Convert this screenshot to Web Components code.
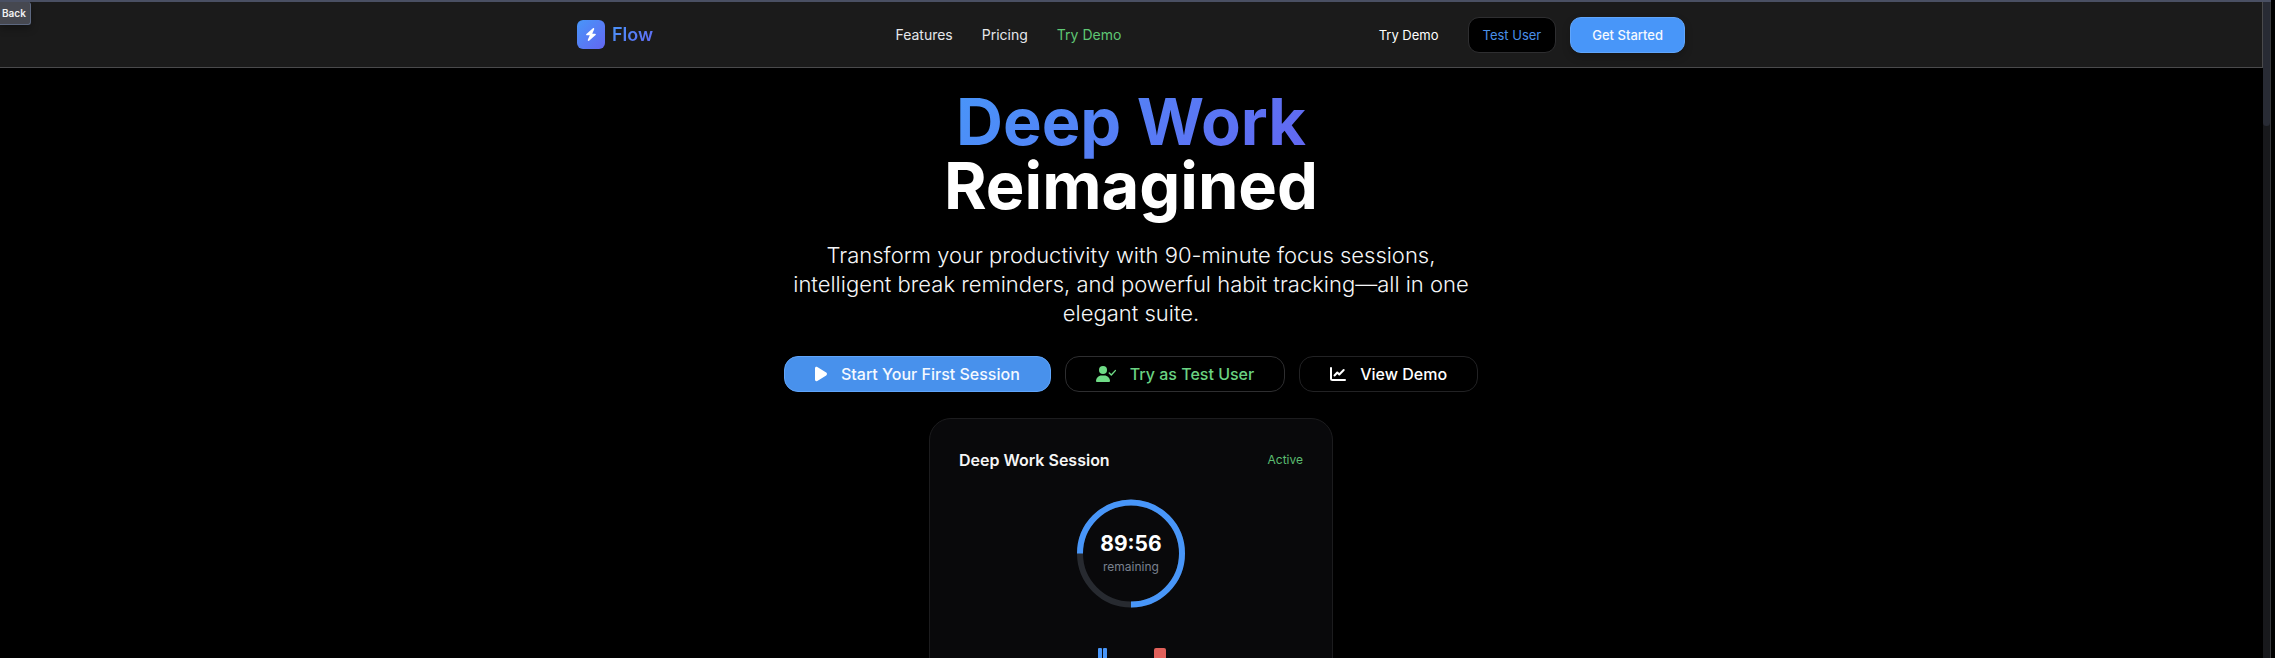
<!DOCTYPE html>
<html lang="en">
<head>
<meta charset="utf-8">
<title>Flow – Deep Work Reimagined</title>
<style>
html, body { margin: 0; height: 100%; }
body { background: #000; color: #fff; font-family: Inter, sans-serif; overflow: hidden; }
</style>
</head>
<body>
<flow-page></flow-page>
<script>
const define = (name, html) => customElements.define(name, class extends HTMLElement {
  constructor() {
    super();
    const t = document.createElement('template');
    t.innerHTML = html;
    this.attachShadow({ mode: 'open' }).append(t.content.cloneNode(true));
  }
});

define('flow-logo', `
<style>
:host { display: block; }
a { display: flex; align-items: center; gap: 7px; text-decoration: none; font-size: 18px; line-height: 28px; font-weight: 600; }
.mark { display: grid; place-items: center; width: 28px; height: 29px; border-radius: 6px; background: linear-gradient(135deg, #4896f9, #6366f1); }
.name { background: linear-gradient(135deg, #4896f9, #6366f1); -webkit-background-clip: text; background-clip: text; color: transparent; }
svg { display: block; }
</style>
<a href="#"><span class="mark"><svg width="12" height="13" viewBox="0 0 448 512"><path d="M349.4 44.6c5.9-13.7 1.5-29.7-10.6-38.5s-28.6-8-39.9 1.8l-256 224c-10 8.8-13.6 22.9-8.9 35.3S50.7 288 64 288l111.500 0L98.600 467.400c-5.900 13.700-1.500 29.700 10.600 38.500s28.600 8 39.900-1.800l256-224c10-8.800 13.600-22.900 8.900-35.300s-16.600-20.700-30-20.700l-111.500 0L349.400 44.600z" fill="#fff"/></svg></span><span class="name">Flow</span></a>`);

define('flow-nav', `
<style>
:host { display: block; }
nav { display: flex; gap: 29px; font-size: 14px; line-height: 20px; }
::slotted(a) { color: #e5e7eb; text-decoration: none; }
::slotted(a.accent) { color: #5fc774; }
</style>
<nav aria-label="Main"><slot></slot></nav>`);

define('flow-button', `
<style>
:host { display: block; }
button { display: flex; align-items: center; justify-content: center; gap: 14px; box-sizing: border-box; height: 36px; width: 100%; margin: 0; padding: 0 var(--pad, 14px); border: 1px solid var(--line, #2e2e30); border-radius: 11px; background: #000; color: inherit; font: 400 13px/16px Inter, sans-serif; white-space: nowrap; }
:host([kind=primary]) button { background: #4896f9; border-color: #60a5fa; color: #f5f9ff; font-weight: 500; box-shadow: 0 4px 8px #0003; }
:host([kind=plain]) button { background: none; border-color: transparent; }
:host([size=large]) button { font-size: 16px; font-weight: 500; line-height: 24px; border-radius: 14px; }
:host([size=large][kind=primary]) button { background: #4891ec; }
</style>
<button type="button"><slot name="icon"></slot><slot></slot></button>`);

define('flow-header', `
<style>
:host { display: block; background: #1b1b1b; border: solid #4a4a4c; border-width: 0 1px 1px 0; }
.bar { display: flex; justify-content: space-between; align-items: center; max-width: 1108px; margin: 0 auto; height: 65px; }
.actions { display: flex; gap: 14px; align-items: center; }
.test { color: #4a90e8; }
.start { --pad: 21px; }
</style>
<header><div class="bar">
<flow-logo></flow-logo>
<flow-nav><a href="#features">Features</a><a href="#pricing">Pricing</a><a class="accent" href="#demo">Try Demo</a></flow-nav>
<div class="actions"><flow-button kind="plain">Try Demo</flow-button><flow-button class="test">Test User</flow-button><flow-button class="start" kind="primary">Get Started</flow-button></div>
</div></header>`);

define('flow-hero', `
<style>
:host { display: block; text-align: center; }
h1 { margin: 0; padding-top: 22px; font-size: 65px; line-height: 64px; font-weight: 700; }
.grad { background: linear-gradient(135deg, #4896f9, #6366f1); -webkit-background-clip: text; background-clip: text; color: transparent; }
p { max-width: 690px; margin: 23px auto 0; font-size: 22px; line-height: 29px; font-weight: 300; color: #f5f6f8; }
.cta { display: flex; justify-content: center; gap: 14px; margin-top: 28px; --pad: 30px; }
.user { color: #6ad382; }
.view { --line: #222224; }
svg { display: block; }
</style>
<h1><span class="grad">Deep Work</span><br>Reimagined</h1>
<p>Transform your productivity with 90-minute focus sessions, intelligent break reminders, and powerful habit tracking—all in one elegant suite.</p>
<div class="cta">
<flow-button size="large" kind="primary"><svg slot="icon" width="12" height="16" viewBox="0 0 12 16"><path d="M0 2.200C0 .9 1.300.4 2.300 1L11.200 6.600c1 .6 1 2.200 0 2.800L2.300 15C1.300 15.600 0 15.100 0 13.800z" fill="#fff"/></svg>Start Your First Session</flow-button>
<flow-button size="large" class="user"><svg slot="icon" width="20" height="16" viewBox="0 0 20 16" fill="#6fdb86"><circle cx="7" cy="4" r="4"/><path d="M5.600 9.500h2.800c3.100 0 5.600 2.500 5.600 5.600 0 .5-.4.9-.9.9H.9c-.5 0-.9-.4-.9-.9C0 12 2.500 9.500 5.600 9.500z"/><path d="m13.300 7 2 2 4-4.400" fill="none" stroke="#6fdb86" stroke-width="1.400" stroke-linecap="round" stroke-linejoin="round"/></svg>Try as Test User</flow-button>
<flow-button size="large" class="view"><svg slot="icon" width="16" height="14" viewBox="0 0 16 14" fill="none" stroke="#fff" stroke-width="2" stroke-linecap="round" stroke-linejoin="round"><path d="M1 1v10.500c0 .8.700 1.500 1.500 1.500H15M4.500 8.500 7.300 5.500l2 2 4.400-4.500"/></svg>View Demo</flow-button>
</div>`);

define('session-timer', `
<style>
:host { display: grid; width: 108px; height: 109px; margin: 0 auto; }
svg, .text { grid-area: 1 / 1; }
svg { width: 100%; height: 100%; }
.text { align-self: center; text-align: center; padding-bottom: 2px; }
.time { font-size: 21px; line-height: 28px; font-weight: 700; }
.note { font-size: 12px; line-height: 18px; color: #7a818f; }
</style>
<svg viewBox="0 0 108 108" fill="none" stroke-width="6"><circle cx="54" cy="54" r="51" stroke="#272a30"/><path d="M3 54a51 51 0 1 1 51 51" stroke="#4896f9"/></svg>
<div class="text"><div class="time">89:56</div><div class="note">remaining</div></div>`);

define('session-card', `
<style>
:host { display: block; box-sizing: border-box; max-width: 404px; margin: 26px auto 0; padding: 29px; border: 1px solid #1c1c1e; border-radius: 22px; background: #09090b; }
.head { display: flex; justify-content: space-between; align-items: center; margin-bottom: 27px; }
h2 { margin: 0; font-size: 16px; line-height: 24px; font-weight: 600; color: #f5f5f5; }
.state { font-size: 12px; line-height: 16px; color: #5bbd71; }
.controls { display: flex; justify-content: center; gap: 14px; margin-top: 24px; }
button { display: grid; place-items: center; width: 44px; height: 44px; padding: 0; border: 0; background: none; }
</style>
<div class="head"><h2>Deep Work Session</h2><span class="state">Active</span></div>
<session-timer></session-timer>
<div class="controls">
<button type="button" aria-label="Pause"><svg width="9" height="12" viewBox="0 0 9 12" fill="#4896f9"><rect width="4" height="12" rx="1"/><rect x="5" width="4" height="12" rx="1"/></svg></button>
<button type="button" aria-label="Stop"><svg width="12" height="12" viewBox="0 0 12 12"><rect width="12" height="12" rx="2" fill="#e0605a"/></svg></button>
</div>`);

define('flow-page', `
<style>
:host { display: grid; grid-template-columns: 1fr 8px; box-sizing: border-box; height: 100vh; overflow: hidden; border-top: 2px solid #4a5063; margin-right: 4px; position: relative; }
main { min-width: 0; overflow: hidden; }
.content { padding-right: 1px; }
.track { background: #18191c; border-right: 1px solid #38393c; }
.thumb { height: 124px; border-radius: 0 0 4px 4px; background: #282b34; }
.back { position: absolute; left: 0; top: 0; box-sizing: border-box; height: 23px; padding: 0 4px 0 2px; border: 1px solid #5d6880; border-left: 0; border-top: 0; border-radius: 0 3px 3px 0; background: #464850; color: #f0f0f0; font: 600 10px/20px Inter, sans-serif; box-shadow: 0 3px 8px #0005; }
</style>
<main><flow-header></flow-header><div class="content"><flow-hero></flow-hero><session-card></session-card></div></main>
<div class="track"><div class="thumb"></div></div>
<button class="back" type="button">Back</button>`);
</script>
</body>
</html>
